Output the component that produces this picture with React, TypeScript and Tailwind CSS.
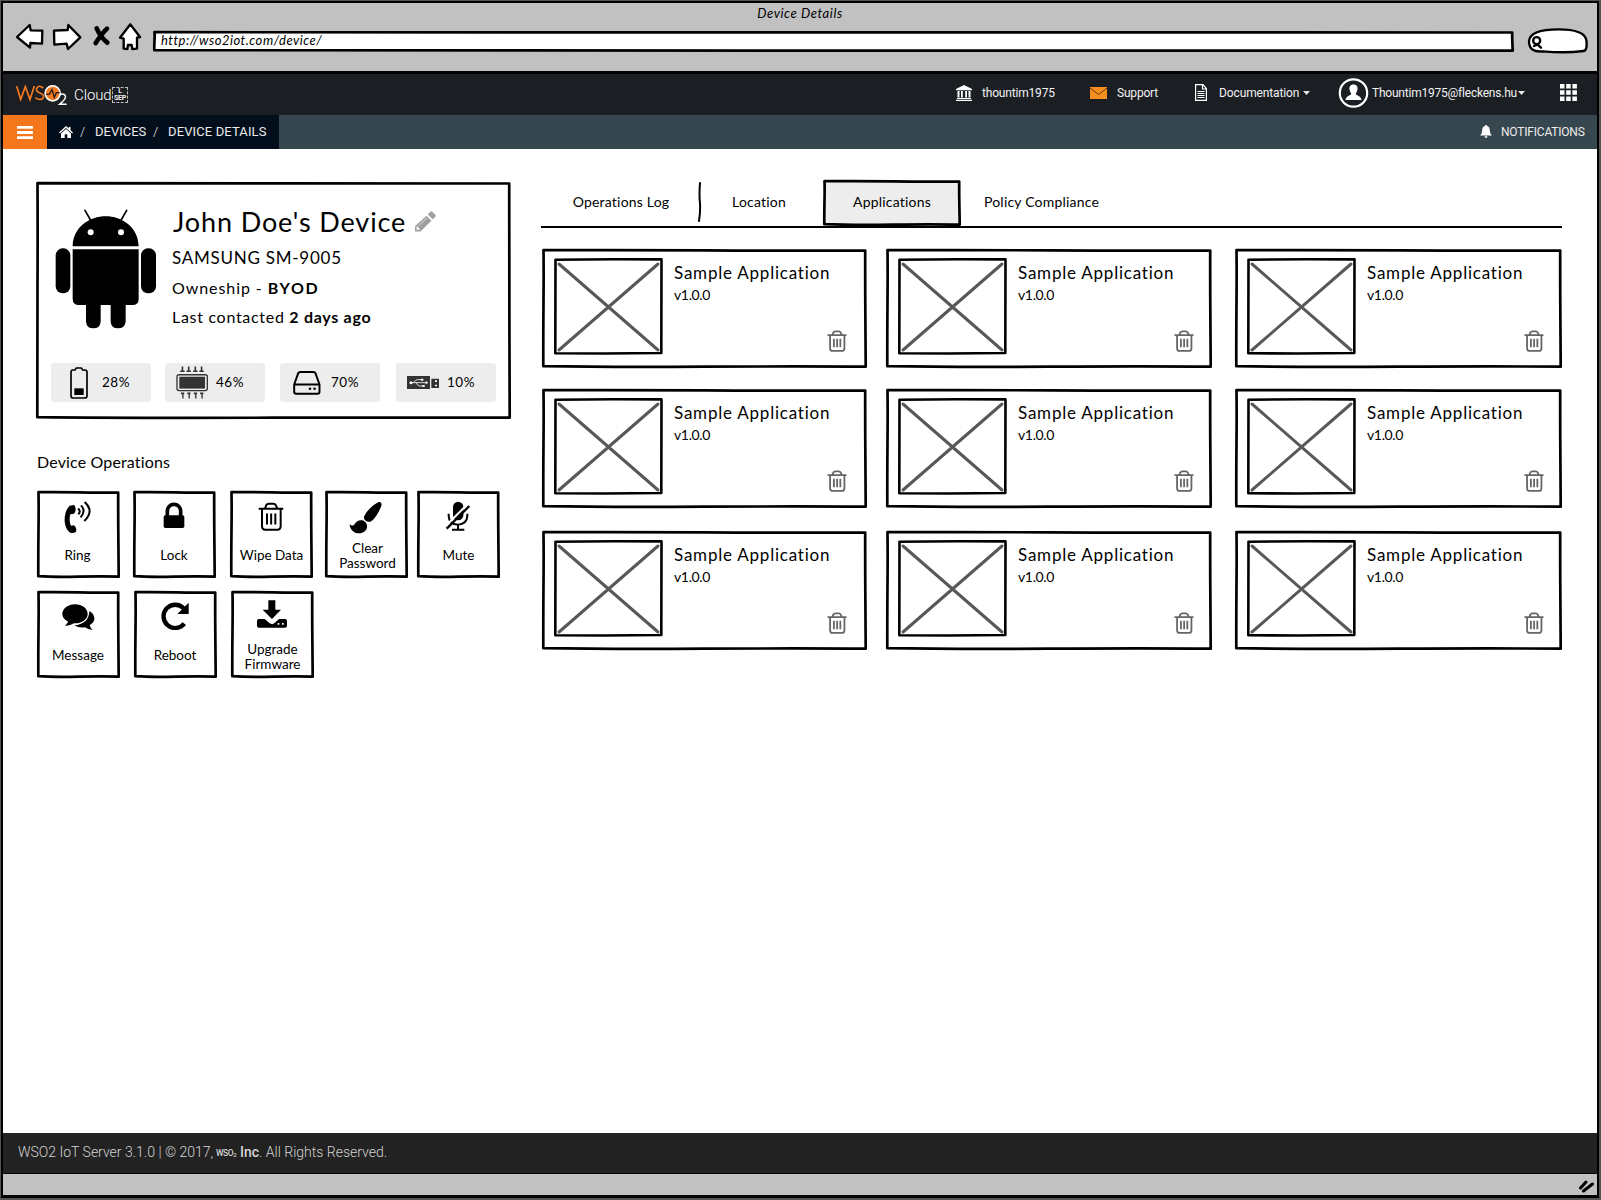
import React from 'react';

type BoxProps = { w: number; h: number; className?: string; children?: React.ReactNode; fill?: string };

/* Box with a slightly uneven, pen-like outline; the wobble stays below a pixel at any size. */
function SketchBox({ w, h, className = '', children, fill = 'none' }: BoxProps) {
  const r = w - 1.3;
  const b = h - 1.3;
  const d = `M1.5 1.2 Q${w * 0.25} 0.9 ${w * 0.5} 1.4 T${r - 0.5} 1.5 Q${r - 0.6} ${h * 0.3} ${r - 0.3} ${h * 0.6} T${r} ${b} Q${w * 0.8} ${b - 0.5} ${w * 0.5} ${b} T1.3 ${b - 0.5} Q1.2 ${h * 0.7} 1.5 ${h * 0.45} T1.5 1.2 Z`;
  return (
    <div className={`relative shrink-0 ${className}`}>
      <svg className="pointer-events-none absolute inset-0 h-full w-full overflow-visible" viewBox={`0 0 ${w} ${h}`} preserveAspectRatio="none">
        <path d={d} fill={fill} stroke="#000" strokeWidth="2.7" strokeLinejoin="round" />
      </svg>
      <div className="relative h-full w-full">{children}</div>
    </div>
  );
}

function TrashIcon({ className = '', color = '#000', stroke = 6 }: { className?: string; color?: string; stroke?: number }) {
  return (
    <svg className={className} viewBox="684 186 78 86" fill="none" stroke={color} strokeWidth={stroke} preserveAspectRatio="none">
      <path d="M686 206 H760 M705 205 L709 195 Q711 191 717 191 H730 Q735 191 737 195 L742 205" />
      <path d="M696 207 V257 Q696 268 706 268 H742 Q752 268 752 257 V207 M711 220 V253 M723.500 220 V253 M736 220 V253" />
    </svg>
  );
}

function Wso2Logo() {
  return (
    <svg className="h-[22px] w-[52px]" viewBox="48 256 156 66" fill="none">
      <path d="M50 262 L62 302 L76 264 L90 302 L103 262" stroke="#f4791f" strokeWidth="5" />
      <path d="M130 268 Q116 257 110 269 Q107 279 120 283 Q134 289 130 297 Q121 308 106 297" stroke="#f4791f" strokeWidth="5" />
      <circle cx="158" cy="284" r="22.500" fill="#f4791f" stroke="#fff" strokeWidth="5" />
      <path d="M138 287 H148 L156 273 L163 296 L169 282 H179" stroke="#1b1f23" strokeWidth="4" />
      <path d="M178 292 Q180 285 188 286 Q198 288 196 297 Q194 304 179 317 H200" stroke="#fff" strokeWidth="4.500" />
    </svg>
  );
}

function BrowserChrome() {
  return (
    <div className="flex h-[71px] flex-col border-b-[3px] border-black bg-[#c1c1c1]">
      <div className="flex h-[20px] items-center justify-center pt-[2px] font-['Lato',sans-serif] text-[13px] italic tracking-[0.6px]">Device Details</div>
      <div className="flex h-[36px] items-center">
        <svg className="mb-[8px] ml-[12px] h-[28px] w-[128px] shrink-0" viewBox="45 69 384 84" fill="#fff" stroke="#000" strokeWidth="7" strokeLinejoin="round">
          <path d="M51 111 L89 75 L92 91 L127 92 L126 131 L91 129 L90 143 Z" />
          <path d="M162 92 L203 90 L205 75 L241 112 L204 147 L200 131 L163 134 Z" />
          <path d="M391 73 L420 111 L411 113 L411 146 L397 147 L395 135 L384 135 L382 147 L371 146 L371 116 L360 113 Z" />
          <path d="M290 85 Q302 112 322 128 M321 86 Q306 100 287 129" strokeWidth="14" strokeLinecap="round" fill="none" />
        </svg>
        <SketchBox w={1361} h={21} fill="#fff" className="ml-[10px] h-[21px] w-[1361px]">
          <div className="flex h-full items-center pl-[8px] font-['Lato',sans-serif] text-[13px] italic tracking-[0.52px]">http://wso2iot.com/device/</div>
        </SketchBox>
        <svg className="ml-[13px] h-[26px] w-[62px] shrink-0" viewBox="384 84 184 78" fill="#fff" stroke="#000" strokeWidth="7">
          <path d="M389 124 Q391 88 478 88 Q555 88 561 120 Q565 152 552 153 Q500 160 430 154 Q389 158 389 124 Z" />
          <circle cx="412" cy="122" r="10.500" />
          <path d="M404 138 L414 133 L425 143" strokeLinecap="round" />
        </svg>
      </div>
    </div>
  );
}

function Caret({ className = '' }: { className?: string }) {
  return (
    <svg className={className} viewBox="0 0 7 4" fill="#e6e6e6"><path d="M0 0H7L3.500 4Z" /></svg>
  );
}

function CloudHeader() {
  return (
    <div className="flex h-[41px] items-center bg-[#1b1f23] pb-[4px] pl-[13px] font-['Roboto',sans-serif] text-[12px] text-[#f2f2f2]">
      <div className="mt-[5px] flex w-[940px] shrink-0 items-center">
        <Wso2Logo />
        <span className="ml-[6px] w-[38px] text-[15px] font-light tracking-[-0.1px] text-white">Cloud</span>
        <span className="flex h-[16px] w-[16px] flex-col items-center border border-dashed border-[#bbb] text-[7px] font-bold leading-[7px] tracking-[-0.3px]"><span>L</span><span>SEP</span></span>
      </div>
      <svg className="h-[16px] w-[16px] shrink-0" viewBox="0 0 16 16" fill="#fff"><path d="M8 0L16 4V5.200H0V4ZM1.500 6h2v6.500h-2zM5 6h1.800v6.500H5zM9.200 6H11v6.500H9.200zM12.500 6h2v6.500h-2zM1 13h14v1H1zM0 14.700h16V16H0z" /></svg>
      <span className="ml-[10px] w-[108px] shrink-0 tracking-[-0.18px]">thountim1975</span>
      <svg className="h-[12px] w-[17px] shrink-0" viewBox="0 0 17 12"><rect width="17" height="12" fill="#f78f1e" /><path d="M0 1L8.500 7.500L17 1" fill="none" stroke="#5b3510" strokeWidth="1" /></svg>
      <span className="ml-[10px] w-[78px] shrink-0 tracking-[-0.2px]">Support</span>
      <svg className="h-[17px] w-[12px] shrink-0" viewBox="0 0 12 17" fill="none" stroke="#fff" strokeWidth="1.200"><path d="M.6.6H8L11.400 4.500V16.400H.6ZM7.500.6V5H11.400M2.500 7.500H9.500M2.500 9.500H9.500M2.500 11.500H9.500M2.500 13.500H9.500" /></svg>
      <span className="ml-[12px] w-[84px] shrink-0 tracking-[-0.12px]">Documentation</span>
      <Caret className="w-[7px]" />
      <svg className="ml-[28px] h-[30px] w-[31px] shrink-0" viewBox="0 0 31 30"><circle cx="15.500" cy="15" r="13.700" fill="none" stroke="#fff" strokeWidth="2.200" /><path d="M15.500 6.500C18.500 6.500 20 8.800 19.500 11.500C19 14 18 15 17.700 16C18 17.500 23 17.500 23.500 22H7.500C8 17.500 13 17.500 13.300 16C13 15 12 14 11.500 11.500C11 8.800 12.500 6.500 15.500 6.500Z" fill="#fff" /></svg>
      <span className="ml-[3px] w-[146px] shrink-0 tracking-[-0.22px]">Thountim1975@fleckens.hu</span>
      <Caret className="w-[7px]" />
      <svg className="ml-[35px] h-[17px] w-[17px] shrink-0" viewBox="0 0 17 17" fill="#fff"><path d="M0 0h4.500v4.500H0zM6.200 0h4.500v4.500H6.200zM12.400 0h4.500v4.500h-4.500zM0 6.200h4.500v4.500H0zM6.200 6.200h4.500v4.500H6.200zM12.400 6.200h4.500v4.500h-4.500zM0 12.400h4.500v4.500H0zM6.200 12.400h4.500v4.500H6.200zM12.400 12.400h4.500v4.500h-4.500z" /></svg>
    </div>
  );
}

function Breadcrumbs() {
  return (
    <div className="flex h-[34px] bg-[#37474f] font-['Roboto',sans-serif] text-[13px] text-[#ececec]">
      <div className="flex w-[44px] items-center justify-center bg-[#f4771b]">
        <svg className="h-[13px] w-[16px]" viewBox="0 0 16 13" fill="#fff"><path d="M0 0h16v2.800H0zM0 5.100h16v2.800H0zM0 10.200h16v2.800H0z" /></svg>
      </div>
      <div className="flex w-[232px] items-center bg-[#020e1c] pl-[12px]">
        <svg className="h-[12px] w-[14px] shrink-0" viewBox="0 0 14 12" fill="#fff"><path d="M7 0L9.800 2.600V1H11.500V4.200L14 6.600L13.200 7.400L7 1.900L.8 7.400L0 6.600ZM7 3L12 7.400V12H8.300V8.300H5.700V12H2V7.400Z" /></svg>
        <span className="ml-[7px] w-[15px] shrink-0 font-light">/</span>
        <span className="w-[58px] shrink-0">DEVICES</span>
        <span className="w-[15px] shrink-0 font-light">/</span>
        <span className="shrink-0 tracking-[0.12px]">DEVICE DETAILS</span>
      </div>
      <div className="ml-[1201px] flex items-center">
        <svg className="mb-[2px] h-[13px] w-[12px] shrink-0" viewBox="0 0 12 13" fill="#fff"><path d="M6 0C6.700 0 7 .5 7 1C9.500 1.500 9.800 4 9.900 6C10 8.500 11 9.500 12 10.500H0C1 9.500 2 8.500 2.100 6C2.200 4 2.500 1.500 5 1C5 .5 5.300 0 6 0ZM4.500 11.200H7.500Q7.400 13 6 13Q4.600 13 4.500 11.200Z" /></svg>
        <span className="ml-[9px] whitespace-nowrap text-[12px] tracking-[-0.2px]">NOTIFICATIONS</span>
      </div>
    </div>
  );
}

function Android() {
  return (
    <svg className="h-[120px] w-[102px] shrink-0" viewBox="76 116 306 360">
      <path d="M129 228 C130 170 180 138 228 138 C276 138 326 170 327 228 Z M129 237 H327 V385 Q327 404 308 404 H148 Q129 404 129 385 Z" />
      <rect x="78" y="234" width="44" height="135" rx="21" />
      <rect x="334" y="234" width="45" height="135" rx="21" />
      <path d="M169 395 H213 V454 Q211 474 191 474 Q171 474 169 454 Z M243 395 H288 V454 Q285 474 265 474 Q245 474 243 454 Z" />
      <path d="M166 120 L186 155 M291 120 L271 155" stroke="#000" strokeWidth="5" strokeLinecap="round" />
      <circle cx="183" cy="186" r="9" fill="#fff" />
      <circle cx="274" cy="186" r="9" fill="#fff" />
    </svg>
  );
}

const stats = [
  {
    value: '28%',
    box: 'ml-[15px] pl-[19px]',
    text: 'ml-[14px]',
    icon: (
      <svg className="mt-[1px] h-[32px] w-[18px]" viewBox="119 591 54 96" fill="none" stroke="#000" strokeWidth="5">
        <path d="M127 600 H134 L138 594 H153 L157 600 H164 Q170 600 170 607 V678 Q170 684 164 684 H128 Q122 684 122 678 V607 Q122 600 127 600 Z" />
        <rect x="132" y="655" width="28" height="20" fill="#000" stroke="none" />
      </svg>
    ),
  },
  {
    value: '46%',
    box: 'ml-[14px] pl-[11px]',
    text: 'ml-[8px]',
    icon: (
      <svg className="h-[33px] w-[32px]" viewBox="437 590 97 99" fill="#333">
        <rect x="440" y="616" width="92" height="48" rx="6" fill="none" stroke="#333" strokeWidth="4" />
        <rect x="447" y="622" width="78" height="36" />
        <path d="M454 591h5v12h4v5h-13v-5h4zM473 591h5v12h4v5h-13v-5h4zM493 591h5v12h4v5h-13v-5h4zM512 591h5v12h4v5h-13v-5h4zM452 670h10v5h-2v13h-4v-13h-4zM471 670h10v5h-2v13h-4v-13h-4zM491 670h10v5h-2v13h-4v-13h-4zM510 670h10v5h-2v13h-4v-13h-4z" />
      </svg>
    ),
  },
  {
    value: '70%',
    box: 'ml-[15px] pl-[13px]',
    text: 'ml-[10px]',
    icon: (
      <svg className="mt-[2px] h-[24px] w-[28px]" viewBox="790 604 84 73" fill="none" stroke="#000" strokeWidth="6" strokeLinejoin="round">
        <path d="M793 645 L805 611 Q807 607 812 607 H851 Q856 607 858 611 L870 645 V667 Q870 673 864 673 H799 Q793 673 793 667 Z M793 645 H870" />
        <circle cx="841" cy="658" r="4" fill="#000" stroke="none" />
        <circle cx="855" cy="658" r="4" fill="#000" stroke="none" />
      </svg>
    ),
  },
  {
    value: '10%',
    box: 'ml-[16px] pl-[11px]',
    text: 'ml-[8px]',
    icon: (
      <svg className="mt-[1px] h-[13px] w-[32px]" viewBox="1131 618 96 39" fill="#333">
        <path d="M1131 618h69v39h-69zM1204 626h23v28h-23z" />
        <path d="M1141 638 H1190 M1150 638 Q1157 630 1162 629 H1174 M1158 638 Q1164 648 1168 648 H1178" fill="none" stroke="#fff" strokeWidth="2.500" />
        <circle cx="1143" cy="638" r="4.500" fill="#fff" /><path d="M1187 633l8 5-8 5zM1173 626h7v6h-7zM1177 645h7v6h-7zM1215 631h6v5h-6zM1215 644h6v5h-6z" fill="#fff" />
      </svg>
    ),
  },
];

function DeviceCard() {
  return (
    <SketchBox w={475} h={237} className="ml-[-1px] h-[237px] w-[475px]">
      <div className="flex pl-[19px] pt-[27px]">
        <Android />
        <div className="ml-[15px] flex flex-col whitespace-nowrap">
          <div className="flex h-[24px] items-center">
            <span className="w-[234px] pl-[1px] text-[27px] leading-[27px] tracking-[0.88px]">John Doe's Device</span>
            <svg className="ml-[9px] h-[21px] w-[21px]" viewBox="1154 124 64 63" fill="#a0a0a0"><path d="M1201 126q3-3 6 0l9 9q3 3 0 6l-8 8-15-15zM1189 138l15 15-33 33h-17v-16zM1159 172v9h8l2-2-8-9z" fillRule="evenodd" /><path d="M1190 144L1166 168" stroke="#fff" strokeWidth="2" /></svg>
          </div>
          <div className="mt-[13px] h-[24px] text-[17px] leading-[24px] tracking-[0.75px]">SAMSUNG SM-9005</div>
          <div className="mt-[6px] h-[24px] text-[16px] leading-[24px] tracking-[0.92px]">Owneship - <b className="tracking-[1.7px]">BYOD</b></div>
          <div className="mt-[5px] h-[24px] text-[16px] leading-[24px] tracking-[0.7px]">Last contacted <b>2 days ago</b></div>
        </div>
      </div>
      <div className="mt-[34px] flex text-[13.500px]">
        {stats.map((s) => (
          <div key={s.value} className={`flex h-[39px] w-[100px] shrink-0 items-center rounded-[3px] bg-[#ededed] pb-[1px] ${s.box}`}>
            {s.icon}
            <span className={`tracking-[0.5px] ${s.text}`}>{s.value}</span>
          </div>
        ))}
      </div>
    </SketchBox>
  );
}

const RingIcon = (
  <svg className="h-[32px] w-[28px]" viewBox="103 182 84 96">
    <path d="M120 196 C109 206 104 226 105 242 C106 262 116 276 126 279 L138 276 C142 268 139 260 133 255 L124 256 C119 246 119 232 122 222 L133 220 C139 215 140 204 134 194 Z" />
    <path d="M145 205 Q155 212 146 222 M154 195 Q170 211 153 231 M165 185 Q195 212 164 242" fill="none" stroke="#000" strokeWidth="6" />
  </svg>
);
const LockIcon = (
  <svg className="mt-[1px] h-[26px] w-[22px]" viewBox="400 187 66 78">
    <rect x="402" y="227" width="62" height="38" rx="5" />
    <path d="M413 230 V214 A20 20 0 0 1 453 214 V230" fill="none" stroke="#000" strokeWidth="11" />
  </svg>
);
const BrushIcon = (
  <svg className="h-[33px] w-[34px]" viewBox="958 181 102 99">
    <path d="M1047 184 C1055 182 1058 189 1054 198 C1044 222 1032 239 1022 243 C1012 245 1001 237 1003 228 C1010 212 1030 192 1047 184Z" />
    <path d="M998 239 C1009 242 1014 252 1012 261 C1008 274 996 278 984 278 C970 276 960 264 960 250 C966 256 972 256 975 250 C980 242 988 237 998 239Z" />
  </svg>
);
const MuteIcon = (
  <svg className="h-[30px] w-[26px]" viewBox="1246 181 78 90" fill="none" stroke="#000" strokeWidth="6">
    <rect x="1270" y="183" width="31" height="56" rx="15.500" fill="#000" stroke="none" />
    <path d="M1257 219 V226 Q1258 251 1285 252 Q1312 250 1313 226 V219 M1285 252 V267 M1267 267 H1304" />
    <path d="M1314 190 L1247 257" stroke="#fff" strokeWidth="6" />
    <path d="M1319 196 L1251 264" strokeWidth="7" />
  </svg>
);
const MessageIcon = (
  <svg className="mt-[3px] h-[26px] w-[33px]" viewBox="95 493 99 78">
    <path d="M177 514 C191 521 196 537 189 547 C186 552 181 554 178 556 Q180 565 187 570 Q174 571 164 563 Q146 566 132 557 C159 555 177 540 177 514 Z" />
    <path d="M134 494 C156 494 172 507 172 523 C172 540 153 552 131 551 Q119 559 104 559 Q113 551 113 545 C101 540 96 531 96 523 C96 507 113 494 134 494 Z" />
  </svg>
);
const RebootIcon = (
  <svg className="mt-[1px] h-[28px] w-[30px]" viewBox="391 487 90 84">
    <path d="M464 552 A35 35 0 1 1 462 506" fill="none" stroke="#000" strokeWidth="13" />
    <path d="M477 489 V523 H443 Z" />
  </svg>
);
const UpgradeIcon = (
  <svg className="-mt-[1px] h-[28px] w-[30px]" viewBox="681 482 90 84">
    <path d="M715 483h21v28h17l-27 28-28-28h17z" />
    <path d="M686 539h18l15 13q7 5 14 0l14-13h18q6 0 6 6v14q0 6-6 6h-79q-5 0-5-6v-14q0-6 5-6z" />
    <path d="M743 551h5v5h-5zM756 551h5v5h-5z" fill="#fff" />
  </svg>
);

function OpTile({ icon, label, gap, pad = 'pr-[1px] mt-[5px]' }: { icon: React.ReactNode; label: string; gap: string; pad?: string }) {
  return (
    <SketchBox w={83} h={87} className={`h-[87px] w-[83px] ${gap}`}>
      <div className="flex h-[52px] items-start justify-center pr-[1px] pt-[10px]">{icon}</div>
      <div className={`whitespace-pre text-center text-[13.500px] leading-[15px] ${pad}`}>{label}</div>
    </SketchBox>
  );
}

type CardProps = { className: string; w: number; trash: string };

function AppCard({ className, w, trash }: CardProps) {
  return (
    <SketchBox w={w} h={119} className={`h-[119px] ${className}`}>
      <div className="flex h-full pl-[12px] pt-[9px]">
        <svg className="h-[97px] w-[109px] shrink-0" viewBox="0 0 109 97" fill="none" stroke="#000" strokeWidth="2.600">
          <path d="M5 6L104 92M104 6L5 92" stroke="#58585a" strokeWidth="3" strokeLinecap="round" />
          <path d="M1.500 1.700L60 1.300L107.500 1.400L107.300 95L50 95.500L1.300 95.200Z" strokeLinejoin="round" />
        </svg>
        <div className="ml-[11px] flex-1 whitespace-nowrap">
          <div className="mt-[4px] text-[17px] leading-[22px] tracking-[0.78px]">Sample Application</div>
          <div className="mt-[2px] text-[14px] leading-[18px] tracking-[-0.35px]">v1.0.0</div>
          <div className={`mt-[26px] flex justify-end ${trash}`}><TrashIcon className="h-[22px] w-[20px]" color="#666" stroke={7} /></div>
        </div>
      </div>
    </SketchBox>
  );
}

function AppRow({ className }: { className: string }) {
  return (
    <div className={`ml-[1px] flex ${className}`}>
      <AppCard w={325} className="w-[325px]" trash="pr-[20px]" />
      <AppCard w={326} className="ml-[19px] w-[326px]" trash="pr-[18px]" />
      <AppCard w={327} className="ml-[23px] w-[327px]" trash="pr-[18px]" />
    </div>
  );
}

export default function App() {
  return (
    <div className="h-[1200px] w-[1601px] overflow-hidden bg-[#555] pl-[1px] pt-[1px] font-['Lato',sans-serif] text-black">
      <div className="flex h-[1197px] w-[1598px] flex-col border-b-[3px] border-l-2 border-r-2 border-t-[2.500px] border-black bg-white">
        <BrowserChrome />
        <CloudHeader />
        <Breadcrumbs />
        <main className="flex h-[984px] shrink-0 pl-[34px] pt-[31px]">
          <section className="w-[504px] shrink-0 pt-[2px]">
            <DeviceCard />
            <h2 className="mt-[31px] text-[16px] leading-[24px] tracking-[0.15px]">Device Operations</h2>
            <div className="mt-[17px] flex">
              <OpTile gap="" icon={RingIcon} label="Ring" pad="pr-[2px] mt-[5px]" />
              <OpTile gap="ml-[13px]" icon={LockIcon} label="Lock" />
              <OpTile gap="ml-[14px]" icon={<TrashIcon className="mt-[1px] h-[29px] w-[26px]" />} label="Wipe Data" pad="mt-[5px]" />
              <OpTile gap="ml-[12px]" icon={BrushIcon} label={'Clear\nPassword'} pad="pl-[2px] -mt-[2px]" />
              <OpTile gap="ml-[9px]" icon={MuteIcon} label="Mute" pad="mt-[5px]" />
            </div>
            <div className="mt-[13px] flex">
              <OpTile gap="" icon={MessageIcon} label="Message" />
              <OpTile gap="ml-[14px]" icon={RebootIcon} label="Reboot" />
              <OpTile gap="ml-[14px]" icon={UpgradeIcon} label={'Upgrade\nFirmware'} pad="-mt-[1px]" />
            </div>
          </section>
          <section className="w-[1021px] shrink-0">
            <div className="flex h-[48px] border-b-2 border-black text-[14px] tracking-[0.2px]">
              <div className="flex w-[157px] items-center justify-center pb-[4px] pl-[3px]">Operations Log</div>
              <svg className="mt-[2px] h-[40px] w-[4px] shrink-0" viewBox="0 0 4 40" fill="none" stroke="#000" strokeWidth="2" strokeLinecap="round"><path d="M2 1Q1 12 2 22Q2.500 30 1 39" /></svg>
              <div className="flex w-[121px] items-center justify-center pb-[4px] pr-[7px]">Location</div>
              <SketchBox w={138} h={46} fill="#ededed" className="h-[46px] w-[138px]">
                <div className="flex h-full items-center justify-center pb-[4px]">Applications</div>
              </SketchBox>
              <div className="flex items-center pb-[4px] pl-[23px]">Policy Compliance</div>
            </div>
            <AppRow className="mt-[21px]" />
            <AppRow className="mt-[21px]" />
            <AppRow className="mt-[23px]" />
          </section>
        </main>
        <footer className="flex h-[40px] shrink-0 items-center bg-[#222] pb-[1px] pl-[15px] font-['Roboto',sans-serif] text-[14px] font-light text-[#d4d4d4]">
          <span className="w-[198px] shrink-0">WSO2 IoT Server 3.1.0 | © 2017,</span>
          <span className="w-[24px] shrink-0 text-[8.500px] font-medium leading-[10px] tracking-[-0.4px]">WSO<sub className="text-[6px]">2</sub></span>
          <span><span className="font-medium">Inc</span>. All Rights Reserved.</span>
        </footer>
        <div className="flex flex-1 items-center justify-end border-t border-black bg-[#c1c1c1]">
          <svg className="mr-[2px] mt-[2px] h-[14px] w-[17px]" viewBox="0 0 17 14" fill="none" stroke="#000" strokeWidth="3" strokeLinecap="round"><path d="M2.500 9L8 3M5.500 12L14.500 5" /></svg>
        </div>
      </div>
    </div>
  );
}
